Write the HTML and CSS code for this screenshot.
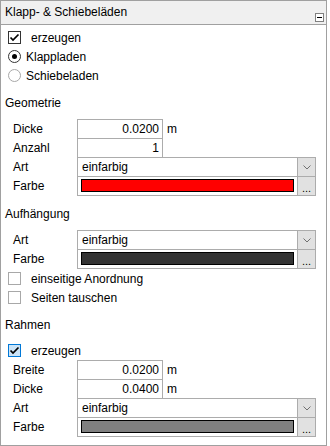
FILE: index.html
```html
<!DOCTYPE html>
<html lang="de">
<head>
  <meta charset="UTF-8" />
  <title>Klapp- &amp; Schiebeläden</title>
  <link rel="stylesheet" href="styles.css">
</head>
<body>
  <div class="panel">
    <div class="panel-header">
      <span class="panel-title">Klapp- &amp; Schiebeläden</span>
      <span class="collapse-btn"><span class="minus"></span></span>
    </div>

    <div class="panel-body">
      <div class="option-group">
        <div class="check-row">
          <span class="checkbox">
            <svg width="11" height="11" viewBox="0 0 11 11"><path d="M1.5 5.5 L4 8 L9.5 2.5" fill="none" stroke="#000" stroke-width="1.7"/></svg>
          </span>
          erzeugen
        </div>
        <div class="radio-row"><span class="radio checked"></span>Klappladen</div>
        <div class="radio-row"><span class="radio"></span>Schiebeladen</div>
      </div>

      <div class="section-title">Geometrie</div>
      <div class="form">
        <div class="field">
          <span class="field-label">Dicke</span>
          <span class="num-input">0.0200</span>
          <span class="unit">m</span>
        </div>
        <div class="field">
          <span class="field-label">Anzahl</span>
          <span class="num-input">1</span>
        </div>
        <div class="field">
          <span class="field-label">Art</span>
          <span class="combo">
            <span class="combo-value">einfarbig</span>
            <span class="combo-btn"><svg width="8" height="5" viewBox="0 0 8 5"><path d="M0.5 0.5 L4 4 L7.5 0.5" fill="none" stroke="#707070" stroke-width="1"/></svg></span>
          </span>
        </div>
        <div class="field">
          <span class="field-label">Farbe</span>
          <span class="combo">
            <span class="swatch swatch-red"></span>
            <span class="dots-btn">...</span>
          </span>
        </div>
      </div>

      <div class="section-title">Aufhängung</div>
      <div class="form">
        <div class="field">
          <span class="field-label">Art</span>
          <span class="combo">
            <span class="combo-value">einfarbig</span>
            <span class="combo-btn"><svg width="8" height="5" viewBox="0 0 8 5"><path d="M0.5 0.5 L4 4 L7.5 0.5" fill="none" stroke="#707070" stroke-width="1"/></svg></span>
          </span>
        </div>
        <div class="field">
          <span class="field-label">Farbe</span>
          <span class="combo">
            <span class="swatch swatch-dark"></span>
            <span class="dots-btn">...</span>
          </span>
        </div>
      </div>
      <div class="check-row"><span class="checkbox unchecked"></span>einseitige Anordnung</div>
      <div class="check-row"><span class="checkbox unchecked"></span>Seiten tauschen</div>

      <div class="section-title">Rahmen</div>
      <div class="check-row">
        <span class="checkbox hover">
          <svg width="11" height="11" viewBox="0 0 11 11"><path d="M1.5 5.5 L4 8 L9.5 2.5" fill="none" stroke="#000" stroke-width="1.7"/></svg>
        </span>
        erzeugen
      </div>
      <div class="form">
        <div class="field">
          <span class="field-label">Breite</span>
          <span class="num-input">0.0200</span>
          <span class="unit">m</span>
        </div>
        <div class="field">
          <span class="field-label">Dicke</span>
          <span class="num-input">0.0400</span>
          <span class="unit">m</span>
        </div>
        <div class="field">
          <span class="field-label">Art</span>
          <span class="combo">
            <span class="combo-value">einfarbig</span>
            <span class="combo-btn"><svg width="8" height="5" viewBox="0 0 8 5"><path d="M0.5 0.5 L4 4 L7.5 0.5" fill="none" stroke="#707070" stroke-width="1"/></svg></span>
          </span>
        </div>
        <div class="field">
          <span class="field-label">Farbe</span>
          <span class="combo">
            <span class="swatch swatch-gray"></span>
            <span class="dots-btn">...</span>
          </span>
        </div>
      </div>
    </div>
  </div>
</body>
</html>
```

FILE: styles.css
```css
* { margin: 0; padding: 0; box-sizing: border-box; }
body {
  background: #fff;
  color: #000;
  font-family: "Liberation Sans", Arial, sans-serif;
  font-size: 12px;
}

.panel {
  width: 327px;
  height: 446px;
  border: 1px solid #a0a0a0;
  background: #fff;
}

.panel-header {
  height: 24px;
  display: flex;
  justify-content: space-between;
  background: #f0f0f0;
  border-bottom: 1px solid #a0a0a0;
  padding-left: 4px;
}

.panel-title { line-height: 23px; }

.collapse-btn {
  align-self: flex-end;
  width: 9px;
  height: 9px;
  margin: 0 2px 2px 0;
  border: 1px solid #808080;
  background: #fff;
  display: flex;
  align-items: center;
  justify-content: center;
}
.collapse-btn .minus { width: 5px; height: 1px; background: #000; }

.panel-body { padding-top: 3px; }

.option-group { margin-bottom: 4px; }

.check-row, .radio-row {
  height: 19px;
  display: flex;
  align-items: center;
  padding-left: 7px;
}

.checkbox {
  width: 13px;
  height: 13px;
  margin-right: 10px;
  border: 1px solid #333;
  background: #fff;
  display: flex;
  align-items: center;
  justify-content: center;
}
.checkbox.unchecked { border-color: #a8a8a8; }
.checkbox.hover { border-color: #0078d7; background: #cce4f7; }

.radio {
  width: 13px;
  height: 13px;
  margin-right: 5px;
  border: 1px solid #a8a8a8;
  border-radius: 50%;
  background: #fff;
  display: flex;
  align-items: center;
  justify-content: center;
}
.radio.checked { border-color: #333; }
.radio.checked::after {
  content: "";
  width: 5px;
  height: 5px;
  border-radius: 50%;
  background: #000;
}

.section-title {
  height: 20px;
  line-height: 21px;
  margin: 8px 0 6px;
  padding-left: 4px;
}

.form { padding: 0 10px 0 12px; }

.field {
  height: 20px;
  display: flex;
  align-items: center;
}
.field + .field { margin-top: -1px; }

.field-label { width: 64px; }

.num-input {
  width: 86px;
  height: 20px;
  line-height: 18px;
  border: 1px solid #acacac;
  padding-right: 3px;
  text-align: right;
}

.unit { margin-left: 4px; }

.combo {
  flex: 1;
  height: 20px;
  display: flex;
  border: 1px solid #acacac;
}

.combo-value {
  flex: 1;
  line-height: 18px;
  padding-left: 4px;
}

.combo-btn, .dots-btn {
  width: 18px;
  border-left: 1px solid #acacac;
  background: #e1e1e1;
  display: flex;
  justify-content: center;
}
.combo-btn { align-items: center; }
.dots-btn { align-items: flex-end; line-height: 14px; font-size: 11px; }

.swatch {
  flex: 1;
  margin: 2px 3px 3px;
  border: 1px solid #000;
}
.swatch-red { background: #ff0000; }
.swatch-dark { background: #333333; }
.swatch-gray { background: #808080; }
```
